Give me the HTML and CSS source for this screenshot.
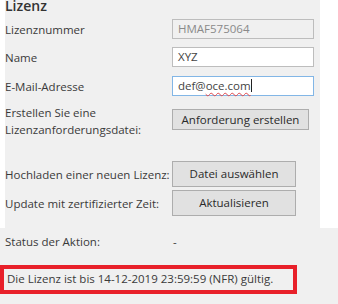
FILE: index.html
```html
<!DOCTYPE html>
<html>
<head>
<meta charset="utf-8">
<link rel="stylesheet" href="styles.css">
</head>
<body>
<div class="panel">
  <div class="title">Lizenz</div>
  <div class="row r-input">
    <div class="label">Lizenznummer</div>
    <div class="field disabled">HMAF575064</div>
  </div>
  <div class="row r-input">
    <div class="label">Name</div>
    <div class="field">XYZ</div>
  </div>
  <div class="row r-input">
    <div class="label">E-Mail-Adresse</div>
    <div class="field focus">def@<span class="spell">oce.com</span><span class="caret"></span></div>
  </div>
  <div class="row r-request">
    <div class="label two">Erstellen Sie eine<br>Lizenzanforderungsdatei:</div>
    <div class="btn b-request">Anforderung erstellen</div>
  </div>
  <div class="row r-upload">
    <div class="label">Hochladen einer neuen Lizenz:</div>
    <div class="btn b-wide">Datei auswählen</div>
  </div>
  <div class="row r-update">
    <div class="label">Update mit zertifizierter Zeit:</div>
    <div class="btn b-wide">Aktualisieren</div>
  </div>
</div>
<div class="lower">
  <div class="row r-status">
    <div class="label">Status der Aktion:</div>
    <div class="value">-</div>
  </div>
  <div class="valid">Die Lizenz ist bis 14-12-2019 23:59:59 (NFR) gültig.</div>
</div>
</body>
</html>
```
FILE: styles.css
```css
html, body {
  margin: 0;
  padding: 0;
  background: #ffffff;
}
body {
  width: 338px;
  height: 304px;
  overflow: hidden;
  font-family: "Open Sans", "Noto Sans", sans-serif;
  font-size: 11.5px;
  color: #3a3a3a;
}
.panel {
  margin-left: 5px;
  width: 315px;
  height: 228px;
  background: #f0f0f0;
  overflow: hidden;
}
.title {
  font-size: 14px;
  font-weight: 600;
  line-height: 16px;
  height: 14px;
  margin-top: -2px;
  color: #333333;
  margin-bottom: 7px;
}
.row {
  display: flex;
  align-items: center;
}
.label {
  width: 167px;
  flex: none;
  line-height: 17px;
  white-space: nowrap;
}
.r-input {
  height: 20px;
  margin-bottom: 8px;
}
.r-input:nth-of-type(3) { margin-bottom: 9px; }
.field {
  box-sizing: border-box;
  width: 142px;
  height: 20px;
  border: 1px solid #bdbdbd;
  background: #ffffff;
  padding: 0 5px;
  line-height: 18px;
  color: #444444;
  position: relative;
}
.field.disabled {
  background: #f0f0f0;
  color: #8a8a8a;
}
.field.focus {
  border-color: #82b6e6;
}
.spell {
  text-decoration: underline wavy #e0474c;
  text-decoration-thickness: 1px;
  text-underline-offset: 2px;
}
.caret {
  display: inline-block;
  width: 1px;
  height: 13px;
  background: #222;
  vertical-align: -2px;
}
.r-request {
  margin-top: 6px;
  height: 36px;
  align-items: flex-start;
}
.btn {
  box-sizing: border-box;
  border: 1px solid #adadad;
  background: #e1e1e1;
  text-align: center;
  color: #2a2a2a;
}
.b-request {
  width: 137px;
  height: 21px;
  line-height: 19px;
  margin-top: 5px;
}
.r-upload {
  margin-top: 21px;
  height: 26px;
}
.b-wide {
  width: 124px;
  height: 26px;
  line-height: 24px;
}
.r-update {
  margin-top: 3px;
  height: 26px;
}
.lower {
  background: #f0f0f0;
  height: 76px;
  padding-left: 5px;
  position: relative;
}
.r-status {
  padding-top: 3px;
  height: 20px;
}
.value { padding-left: 1px; }
.valid {
  position: absolute;
  left: 0;
  top: 37px;
  width: 297px;
  height: 29px;
  box-sizing: border-box;
  border: 4px solid #e8202a;
  padding-left: 3px;
  line-height: 20px;
}
```
